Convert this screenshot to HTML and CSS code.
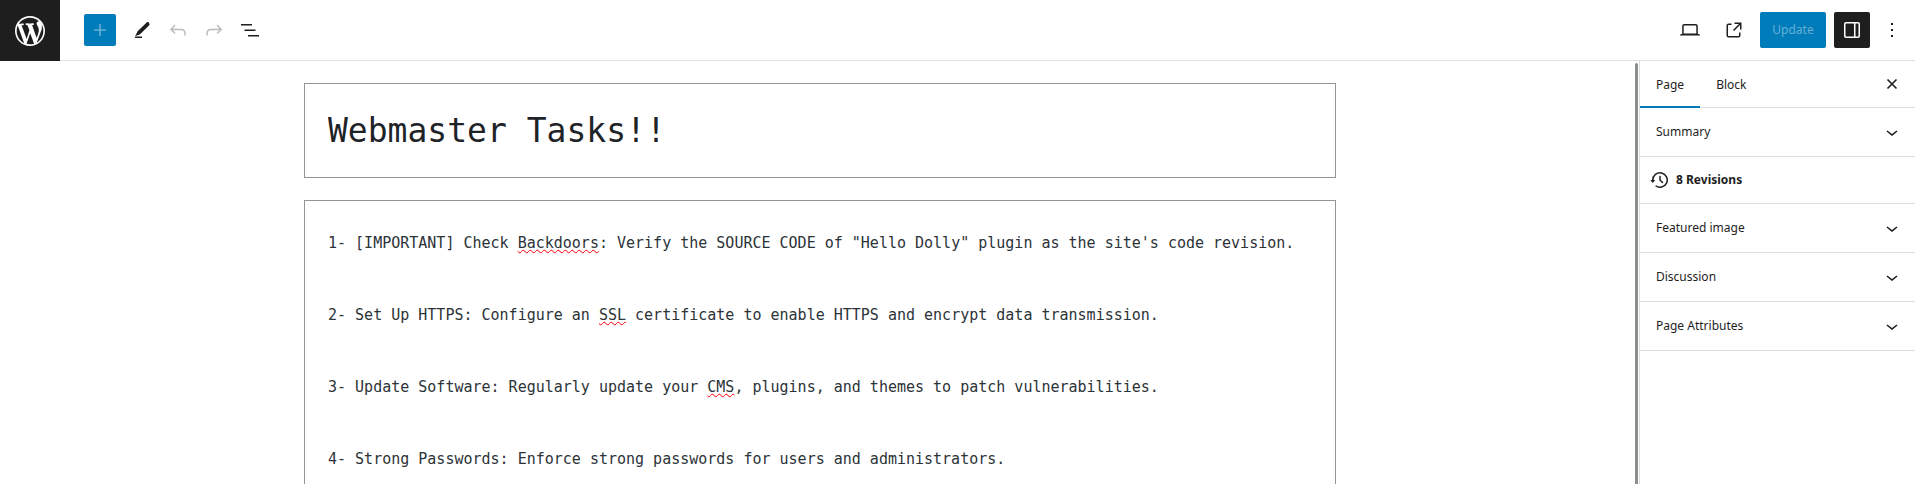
FILE: index.html
```html
<!DOCTYPE html>
<html lang="en">
<head>
<meta charset="utf-8">
<title>Edit Page</title>
<link rel="stylesheet" href="styles.css">
</head>
<body>
<header class="topbar">
  <a class="logo" href="#" aria-label="View Pages">
    <svg width="36" height="36" viewBox="-2 -2 24 24" fill="currentColor"><path d="M20 10c0-5.51-4.49-10-10-10C4.48 0 0 4.49 0 10c0 5.52 4.48 10 10 10 5.51 0 10-4.48 10-10zM7.78 15.37L4.37 6.22c.55-.02 1.17-.08 1.17-.08.5-.06.44-1.13-.06-1.11 0 0-1.45.11-2.37.11-.18 0-.37 0-.58-.01C4.12 2.69 6.87 1.11 10 1.11c2.33 0 4.45.87 6.05 2.34-.68-.11-1.65.39-1.65 1.58 0 .74.45 1.36.9 2.1.35.61.55 1.36.55 2.46 0 1.49-1.4 5-1.4 5l-3.03-8.37c.54-.02.82-.17.82-.17.5-.05.44-1.25-.06-1.22 0 0-1.44.12-2.38.12-.87 0-2.33-.12-2.33-.12-.5-.03-.56 1.2-.06 1.22l.92.08 1.26 3.41zM17.41 10c.24-.64.74-1.87.43-4.25.7 1.29 1.05 2.71 1.05 4.25 0 3.29-1.73 6.24-4.4 7.78.97-2.59 1.94-5.2 2.92-7.78zM6.1 18.09C3.12 16.65 1.11 13.53 1.11 10c0-1.3.23-2.48.72-3.59C3.25 10.3 4.67 14.2 6.1 18.09zm4.03-6.63l2.58 6.98c-.86.29-1.76.45-2.71.45-.79 0-1.57-.11-2.29-.33.81-2.38 1.62-4.74 2.42-7.1z"/></svg>
  </a>
  <div class="tools">
    <button class="add" type="button" aria-label="Toggle block inserter" disabled><svg width="24" height="24" viewBox="0 0 24 24" fill="currentColor"><path d="M18 11.2h-5.2V6h-1.6v5.2H6v1.6h5.2V18h1.6v-5.2H18z"/></svg></button>
    <div class="group">
      <button class="icon" type="button" aria-label="Tools"><svg width="24" height="24" viewBox="0 0 24 24" fill="currentColor"><path d="M18.600 4.300c-.6-.5-1.300-.5-1.900.1L7.600 13.200l-2.200 4.500.3.300 4.400-1.700L19 7.400c.6-.6.700-1.300.2-1.900z"/><path d="M5 18.500h7V20H5z"/></svg></button>
      <button class="icon" type="button" aria-label="Undo" disabled><svg width="24" height="24" viewBox="0 0 24 24" fill="currentColor"><path d="M18.3 11.7c-.6-.6-1.4-.9-2.3-.9H6.7l2.9-3.3-1.1-1-4.500 5L8.500 16l1-1-2.700-2.700H16c.5 0 .9.200 1.300.5 1 1 1 3.400 1 4.500v.3h1.500v-.2c0-1.500 0-4.300-1.500-5.700z"/></svg></button>
      <button class="icon" type="button" aria-label="Redo" disabled><svg width="24" height="24" viewBox="0 0 24 24" fill="currentColor"><path d="M15.6 6.500l-1.100 1 2.900 3.300H8c-.9 0-1.700.3-2.300.9-1.400 1.500-1.400 4.200-1.400 5.600v.2h1.500v-.3c0-1.100 0-3.500 1-4.500.3-.3.700-.5 1.300-.5h9.200L14.500 15l1.100 1.100 4.600-4.600-4.600-5z"/></svg></button>
      <button class="icon" type="button" aria-label="Document Overview"><svg width="24" height="24" viewBox="0 0 24 24" fill="currentColor"><path d="M3 6h11v1.500H3V6Zm3.500 5.500h11V13h-11v-1.500ZM21 17H10v1.500h11V17Z"/></svg></button>
    </div>
  </div>
  <div class="settings">
    <button class="icon" type="button" aria-label="View"><svg width="24" height="24" viewBox="0 0 24 24" fill="currentColor"><path d="M20.500 16h-.7V8c0-1.100-.9-2-2-2H6.200c-1.100 0-2 .9-2 2v8h-.7c-.8 0-1.500.7-1.500 1.500h20c0-.8-.7-1.500-1.500-1.500zM5.700 8c0-.3.2-.5.5-.5h11.600c.3 0 .5.2.5.5v7.600H5.700V8z"/></svg></button>
    <a class="icon" href="#" aria-label="View Page"><svg width="24" height="24" viewBox="0 0 24 24" fill="currentColor"><path d="M19.500 4.500h-7V6h4.440l-5.970 5.970 1.060 1.060L18 7.060v4.440h1.500v-7Zm-13 1a2 2 0 0 0-2 2v10a2 2 0 0 0 2 2h10a2 2 0 0 0 2-2v-3H17v3a.5.5 0 0 1-.5.5h-10a.5.5 0 0 1-.5-.5v-10a.5.5 0 0 1 .5-.5h3V5.500h-3Z"/></svg></a>
    <button class="update" type="button" disabled>Update</button>
    <button class="icon pressed" type="button" aria-label="Settings" aria-pressed="true"><svg width="24" height="24" viewBox="0 0 24 24" fill="currentColor"><path fill-rule="evenodd" d="M18 4H6c-1.100 0-2 .9-2 2v12c0 1.100.9 2 2 2h12c1.100 0 2-.9 2-2V6c0-1.100-.9-2-2-2zm-4 14.500H6c-.3 0-.5-.2-.5-.5V6c0-.3.2-.5.5-.5h8v13zm4.500-.5c0 .3-.2.5-.5.5h-2.500v-13H18c.3 0 .5.2.5.5v12z"/></svg></button>
    <button class="icon narrow" type="button" aria-label="Options"><svg width="24" height="24" viewBox="0 0 24 24" fill="currentColor"><path d="M13 19h-2v-2h2v2zm0-6h-2v-2h2v2zm0-6h-2V5h2v2z"/></svg></button>
  </div>
</header>
<div class="workspace">
  <main class="canvas">
    <div class="editor">
      <input class="title" type="text" aria-label="Add title" value="Webmaster Tasks!!" spellcheck="false">
      <div class="content" role="textbox" aria-multiline="true" aria-label="Type text or HTML" contenteditable="true" spellcheck="false">
        <p>1- [IMPORTANT] Check <span class="misspelt">Backdoors</span>: Verify the SOURCE CODE of "Hello Dolly" plugin as the site's code revision.</p>
        <p>2- Set Up HTTPS: Configure an <span class="misspelt">SSL</span> certificate to enable HTTPS and encrypt data transmission.</p>
        <p>3- Update Software: Regularly update your <span class="misspelt">CMS</span>, plugins, and themes to patch vulnerabilities.</p>
        <p>4- Strong Passwords: Enforce strong passwords for users and administrators.</p>
      </div>
    </div>
    <div class="scrollbar"></div>
  </main>
  <aside class="sidebar">
    <div class="tabs">
      <button class="tab active" type="button">Page</button>
      <button class="tab" type="button">Block</button>
      <button class="icon close" type="button" aria-label="Close Settings"><svg width="24" height="24" viewBox="0 0 24 24" fill="none" stroke="currentColor" stroke-width="1.6"><path d="M7.500 7.500l9 9M16.500 7.500l-9 9"/></svg></button>
    </div>
    <button class="panel" type="button">Summary<svg width="24" height="24" viewBox="0 0 24 24" fill="currentColor"><path d="M17.500 11.600L12 16l-5.500-4.400.9-1.200L12 14l4.500-3.600 1 1.200z"/></svg></button>
    <a class="revisions" href="#"><svg width="24" height="24" viewBox="0 0 24 24" fill="currentColor"><path d="M5.500 12h1.750l-2.500 3-2.500-3H4a8 8 0 113.134 6.350l.907-1.194A6.500 6.500 0 105.500 12zm9.530 1.970l-2.280-2.280V8.500a.75.75 0 00-1.500 0V12a.747.747 0 00.218.529l2.500 2.500a.75.75 0 101.060-1.061z"/></svg>8 Revisions</a>
    <button class="panel" type="button">Featured image<svg width="24" height="24" viewBox="0 0 24 24" fill="currentColor"><path d="M17.500 11.600L12 16l-5.500-4.400.9-1.200L12 14l4.500-3.600 1 1.200z"/></svg></button>
    <button class="panel" type="button">Discussion<svg width="24" height="24" viewBox="0 0 24 24" fill="currentColor"><path d="M17.500 11.600L12 16l-5.500-4.400.9-1.200L12 14l4.500-3.600 1 1.200z"/></svg></button>
    <button class="panel" type="button">Page Attributes<svg width="24" height="24" viewBox="0 0 24 24" fill="currentColor"><path d="M17.500 11.600L12 16l-5.500-4.400.9-1.200L12 14l4.500-3.600 1 1.200z"/></svg></button>
  </aside>
</div>
</body>
</html>
```
FILE: styles.css
```css
* { box-sizing: border-box; }
body {
  margin: 0;
  height: 100vh;
  display: flex;
  flex-direction: column;
  overflow: hidden;
  background: #fff;
  color: #1e1e1e;
  font: 12px/20px "Noto Sans", sans-serif;
}
button, input { font: inherit; color: inherit; }
button { margin: 0; padding: 0; border: 0; background: none; }
a { color: inherit; text-decoration: none; }
svg { display: block; flex: none; }

.topbar {
  display: flex;
  flex: none;
  align-items: center;
  height: 61px;
  border-bottom: 1px solid #e0e0e0;
}
.logo {
  display: flex;
  align-items: center;
  justify-content: center;
  align-self: flex-start;
  flex: none;
  width: 60px;
  height: 61px;
  background: #1e1e1e;
  color: #fff;
}
.tools { display: flex; align-items: center; gap: 8px; padding-left: 24px; }
.group { display: flex; }
.add, .icon {
  display: flex;
  align-items: center;
  justify-content: center;
  width: 36px;
  height: 36px;
  border-radius: 2px;
}
.add { width: 32px; height: 32px; background: #007cba; color: #66b0d6; }
.icon:disabled { color: #bbb; }
.narrow { width: 28px; }
.settings {
  display: flex;
  align-items: center;
  gap: 8px;
  margin-left: auto;
  padding-right: 9px;
}
.update {
  min-width: 66px;
  height: 36px;
  padding: 0 12px;
  border-radius: 2px;
  background: #007cba;
  color: #66b0d6;
}
.pressed { background: #1e1e1e; color: #fff; }

.workspace { display: flex; flex: 1; min-height: 0; }
.canvas {
  display: flex;
  flex: 1;
  min-width: 0;
  padding-left: 5px;
  overflow: hidden;
}
.editor {
  display: flex;
  flex: 1;
  flex-direction: column;
  gap: 22px;
  max-width: 1080px;
  min-width: 0;
  margin: 0 auto;
  padding: 22px 24px;
}
.title, .content {
  width: 100%;
  border: 1px solid #949494;
  border-radius: 0;
  background: #fff;
  font-family: "DejaVu Sans Mono", monospace;
}
.title { flex: none; height: 95px; padding: 0 23px; font-size: 33px; color: #1e2327; }
.content {
  flex: none;
  min-height: 600px;
  padding: 24px 23px;
  color: #2c3338;
  font-size: 15px;
  line-height: 36px;
}
.content p { margin: 0 0 36px; }
.misspelt {
  text-decoration: underline wavy 1px #f00;
  text-decoration-skip-ink: none;
  text-underline-offset: 1px;
}
.scrollbar {
  flex: none;
  width: 3px;
  margin: 2px 1px 0 0;
  border-radius: 2px 2px 0 0;
  background: #8b8f8f;
}

.sidebar { flex: none; width: 276px; border-left: 1px solid #ddd; }
.tabs { display: flex; height: 47px; border-bottom: 1px solid #ddd; }
.tab { height: 47px; padding: 0 16px; }
.active { box-shadow: inset 0 -2px #007cba; }
.close { align-self: center; margin: 0 5px 0 auto; }
.panel, .revisions {
  display: flex;
  align-items: center;
  width: 100%;
  height: 49px;
  padding: 0 11px 0 16px;
  border-bottom: 1px solid #ddd;
}
.panel { justify-content: space-between; }
.revisions { height: 47px; padding-left: 8px; gap: 4px; font-weight: 700; }
```
